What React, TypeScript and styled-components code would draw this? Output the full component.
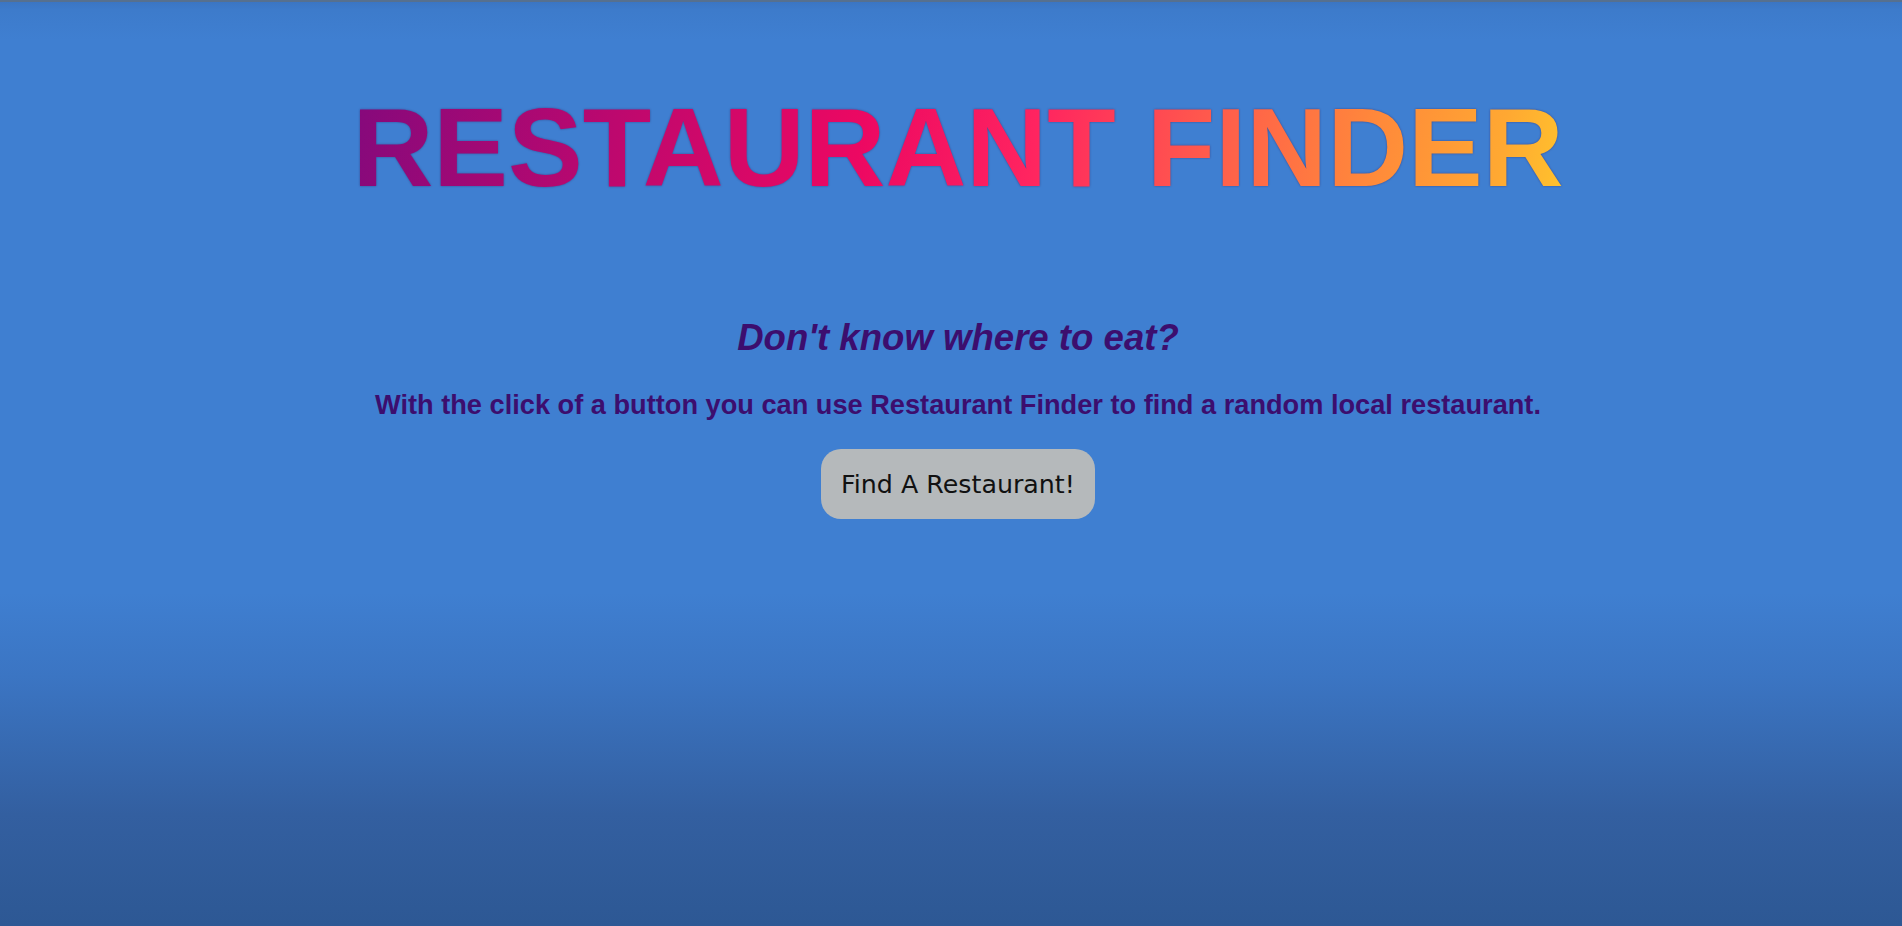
import React from "react"
import styled, { createGlobalStyle } from "styled-components"

const GlobalStyle = createGlobalStyle`
	html, body {
		margin: 0;
		padding: 0;
		height: 100%;
	}
	body {
		font-family: "Liberation Sans", Arial, sans-serif;
		background: #3f7fd1;
	}
`

const App = () => {
	return (
		<Page>
			<GlobalStyle />
			<TopEdge />
			<Content>
				<Title>RESTAURANT FINDER</Title>
				<Tagline>Don't know where to eat?</Tagline>
				<Blurb>
					With the click of a button you can use Restaurant Finder to find a random local
					restaurant.
				</Blurb>
				<FindButton type="button">Find A Restaurant!</FindButton>
			</Content>
		</Page>
	)
}

export default App

const Page = styled.div`
	min-height: 100vh;
	display: flex;
	flex-direction: column;
	background: linear-gradient(
		to bottom,
		#3a74c1 0px,
		#3d7bcb 10px,
		#3f7fd1 40px,
		#3f7fd1 64%,
		#3b75c3 73%,
		#335fa0 88%,
		#2d5894 100%
	);
`

const TopEdge = styled.div`
	height: 2px;
	background: #56708f;
`

const Content = styled.main`
	display: flex;
	flex-direction: column;
	align-items: center;
	padding: 81px 0 0 14px;
`

const Title = styled.h1`
	margin: 0;
	font-family: "Liberation Sans", Arial, sans-serif;
	font-size: 112px;
	font-weight: 700;
	line-height: normal;
	background: linear-gradient(
		100deg,
		#84097c 0%,
		#bd086e 22%,
		#ec0862 42%,
		#ff2460 56%,
		#ff5a4c 70%,
		#ff8a3a 84%,
		#ffa832 94%,
		#ffc42c 100%
	);
	-webkit-background-clip: text;
	background-clip: text;
	color: transparent;
	filter: drop-shadow(0 0 1px rgba(50, 10, 70, 0.45));
`

const Tagline = styled.h2`
	margin: 105px 0 0;
	font-size: 36.6px;
	font-style: italic;
	font-weight: 700;
	line-height: normal;
	color: #3c0e6e;
`

const Blurb = styled.p`
	margin: 30px 0 0;
	font-size: 27.2px;
	font-weight: 700;
	line-height: normal;
	color: #3c0e6e;
`

const FindButton = styled.button`
	margin-top: 28px;
	width: 274px;
	height: 70px;
	padding: 0;
	border: none;
	border-radius: 20px;
	background: #b5b9bb;
	color: #111;
	font-family: "DejaVu Sans", Verdana, sans-serif;
	font-size: 25.3px;
	cursor: pointer;
`
